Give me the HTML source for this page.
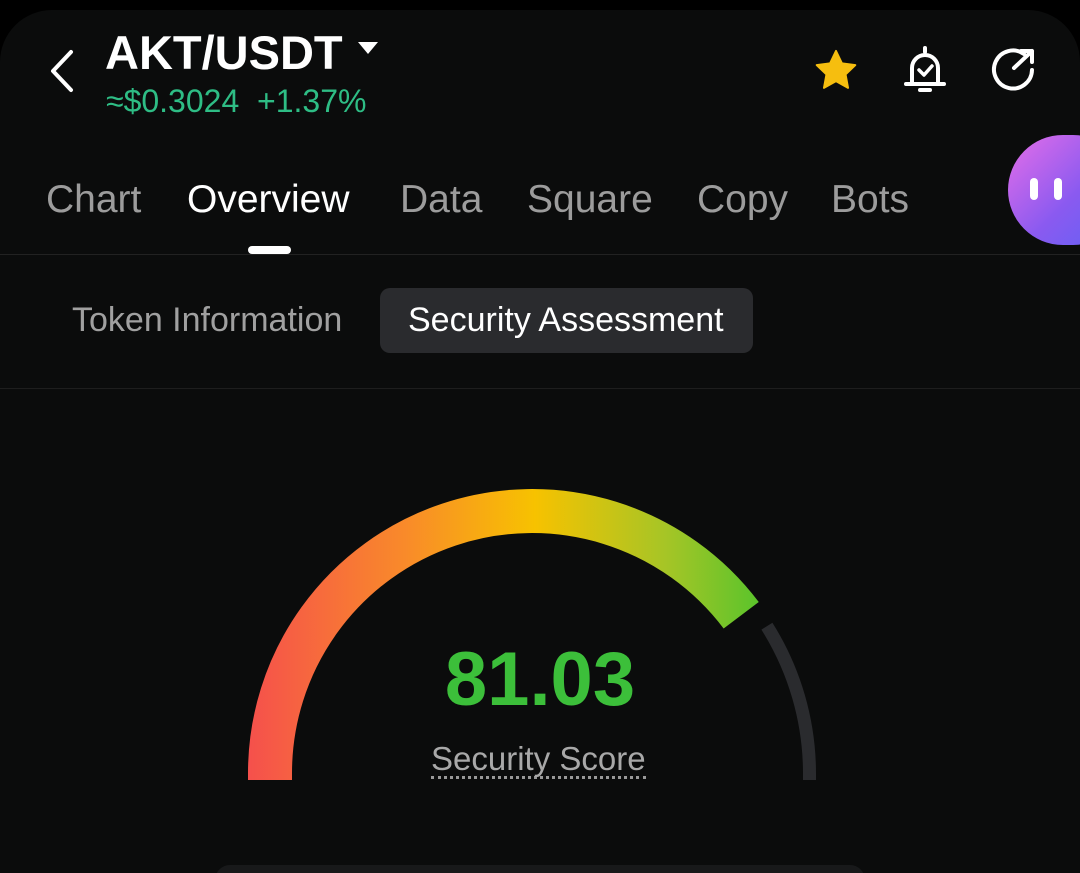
<!DOCTYPE html><html><head><style>
html,body{margin:0;width:1080px;height:873px;overflow:hidden}
body{background:#000;font-family:"Liberation Sans",Arial,sans-serif;position:relative}
.card{position:absolute;left:0;top:10px;width:1080px;height:863px;background:#0b0c0c;border-radius:52px 52px 0 0}
.a{position:absolute;white-space:nowrap}
.tab{position:absolute;top:178px;font-size:39px;color:#9c9c9c}
</style></head><body>
<div class="card"></div>
<svg class="a" style="left:44px;top:48px" width="34" height="46"><path d="M27 4 L9 23 L27 42" fill="none" stroke="#fff" stroke-width="4" stroke-linecap="round" stroke-linejoin="round"/></svg>
<div class="a" style="left:105px;top:25px;font-size:47px;font-weight:bold;color:#fff">AKT/USDT</div>
<svg class="a" style="left:358px;top:42px" width="20" height="14"><path d="M0 0H20L10 12Z" fill="#fff"/></svg>
<div class="a" style="left:106px;top:83px;font-size:32px;color:#2ebd85">≈$0.3024&nbsp; +1.37%</div>
<svg class="a" style="left:810px;top:48px" width="52" height="46" viewBox="0 0 24 24"><path d="M12 1.5l3.1 6.5 7 .9-5.1 4.9 1.3 7-6.3-3.5-6.3 3.5 1.3-7L1.9 8.9l7-.9z" fill="#f6be0f" stroke="#f6be0f" stroke-linejoin="round"/></svg>
<svg class="a" style="left:900px;top:44px" width="50" height="52" viewBox="0 0 50 52"><path d="M25 4v4M12 40V24a13 13 0 0 1 26 0v16M6 40h38M20 46h10" fill="none" stroke="#fff" stroke-width="4" stroke-linecap="round"/><path d="M19 26l5 5 8-9" fill="none" stroke="#fff" stroke-width="3.5" stroke-linecap="round" stroke-linejoin="round"/></svg>
<svg class="a" style="left:988px;top:46px" width="52" height="50" viewBox="0 0 52 50"><path d="M36 8A19 19 0 1 0 44 24" fill="none" stroke="#fff" stroke-width="4" stroke-linecap="round"/><path d="M26 22L44 5M33 5h11v11" fill="none" stroke="#fff" stroke-width="4" stroke-linecap="round" stroke-linejoin="round"/></svg>
<div class="tab" style="left:46px">Chart</div>
<div class="tab" style="left:187px;color:#fff">Overview</div>
<div class="tab" style="left:400px">Data</div>
<div class="tab" style="left:527px">Square</div>
<div class="tab" style="left:697px">Copy</div>
<div class="tab" style="left:831px">Bots</div>
<div class="a" style="left:248px;top:246px;width:43px;height:8px;border-radius:4px;background:#fff"></div>
<div class="a" style="left:1008px;top:135px;width:120px;height:110px;border-radius:55px;background:linear-gradient(135deg,#e66ee8,#8a5af0 55%,#5e62f5)"></div>
<div class="a" style="left:1030px;top:178px;width:8px;height:22px;border-radius:4px;background:#fff"></div>
<div class="a" style="left:1054px;top:178px;width:8px;height:22px;border-radius:4px;background:#fff"></div>
<div class="a" style="left:0;top:254px;width:1080px;height:1px;background:#222"></div>
<div class="a" style="left:72px;top:301px;font-size:34px;color:#a0a0a0">Token Information</div>
<div class="a" style="left:380px;top:288px;width:373px;height:65px;border-radius:10px;background:#2a2b2e"></div>
<div class="a" style="left:408px;top:301px;font-size:34px;color:#fff">Security Assessment</div>
<div class="a" style="left:0;top:388px;width:1080px;height:1px;background:#1e1e1e"></div>
<svg class="a" style="left:0;top:0" width="1080" height="873">
<defs>
<linearGradient id="g" x1="248" y1="0" x2="770" y2="0" gradientUnits="userSpaceOnUse">
<stop offset="0" stop-color="#f5504c"/><stop offset="0.3" stop-color="#f98a2a"/><stop offset="0.55" stop-color="#f7c200"/><stop offset="0.8" stop-color="#a6c526"/><stop offset="1" stop-color="#52c42c"/></linearGradient>
</defs>
<path d="M809.5 780 L809.5 773 A277 277 0 0 0 766.9 626.2" fill="none" stroke="#2a2b2e" stroke-width="13"/>
<path d="M270 780 L270 773 A262 262 0 0 1 741.2 615.3" fill="none" stroke="url(#g)" stroke-width="44"/>
</svg>
<div class="a" style="left:0;width:1080px;text-align:center;top:636px;font-size:76px;font-weight:bold;color:#3cbf3a">81.03</div>
<div class="a" style="left:431px;top:742px;font-size:33px;color:#a8a8a8;border-bottom:3px dotted #999;line-height:34px">Security Score</div>
<div class="a" style="left:215px;top:865px;width:650px;height:30px;border-radius:16px;background:#18191a"></div>
</body></html>
